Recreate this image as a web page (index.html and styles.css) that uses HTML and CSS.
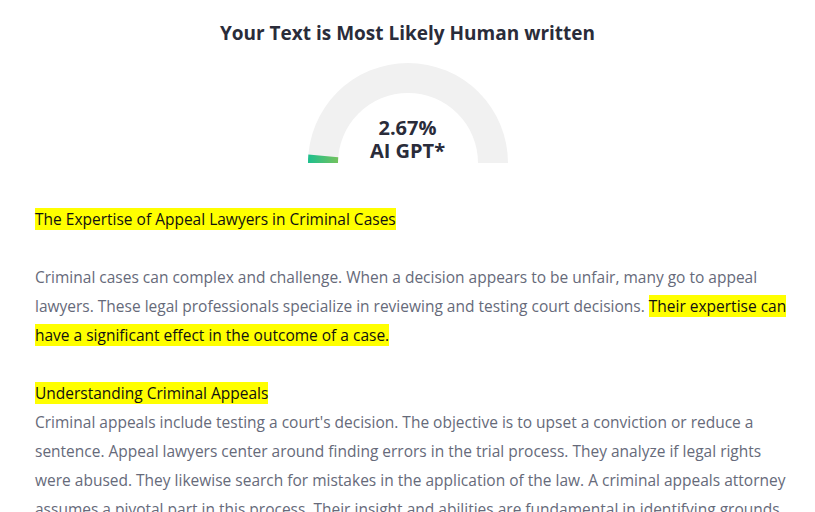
FILE: index.html
```html
<!DOCTYPE html>
<html lang="en">
<head>
  <meta charset="UTF-8" />
  <meta name="viewport" content="width=device-width, initial-scale=1.0"/>
  <title>AI Detector Result</title>
  <link rel="stylesheet" href="styles.css">
</head>
<body>
  <div class="result">
    <h1 class="verdict">Your Text is Most Likely Human written</h1>
    <div class="gauge">
      <svg class="gauge-arc" width="200" height="100" viewBox="0 0 200 100">
        <defs>
          <linearGradient id="ai-grad" x1="0" y1="0" x2="1" y2="0">
            <stop offset="0" stop-color="#1dbf8e"/>
            <stop offset="1" stop-color="#74c25e"/>
          </linearGradient>
        </defs>
        <path d="M0,100 A100,100 0 0 1 200,100 L170,100 A70,70 0 0 0 30,100 Z" fill="#f1f1f1"/>
        <path d="M0,100 A100,100 0 0 1 0.35,91.62 L30.25,94.14 A70,70 0 0 0 30,100 Z" fill="url(#ai-grad)"/>
      </svg>
      <div class="gauge-label">2.67%<br>AI GPT*</div>
    </div>
  </div>

  <div class="text">
    <p class="block"><span class="hl">The Expertise of Appeal Lawyers in Criminal Cases</span></p>
    <p class="block">Criminal cases can complex and challenge. When a decision appears to be unfair, many go to appeal lawyers. These legal professionals specialize in reviewing and testing court decisions. <span class="hl">Their expertise can have a significant effect in the outcome of a case.</span></p>
    <p><span class="hl">Understanding Criminal Appeals</span></p>
    <p>Criminal appeals include testing a court's decision. The objective is to upset a conviction or reduce a sentence. Appeal lawyers center around finding errors in the trial process. They analyze if legal rights were abused. They likewise search for mistakes in the application of the law. A criminal appeals attorney assumes a pivotal part in this process. Their insight and abilities are fundamental in identifying grounds for an appeal.</p>
  </div>
</body>
</html>
```

FILE: styles.css
```css
body {
  margin: 0;
  font-family: 'Segoe UI', 'Open Sans', sans-serif;
  background: #ffffff;
  color: #666a7a;
}

.result {
  display: flex;
  flex-direction: column;
  align-items: center;
}

.verdict {
  margin: 19px 0 0;
  font-size: 19px;
  line-height: 28px;
  font-weight: 700;
  color: #2a2c3a;
}

.gauge {
  position: relative;
  width: 200px;
  height: 100px;
  margin-top: 16px;
}

.gauge-arc {
  display: block;
}

.gauge-label {
  position: absolute;
  left: 0;
  right: 0;
  bottom: 1px;
  text-align: center;
  font-size: 20px;
  line-height: 23px;
  font-weight: 700;
  color: #2a2c3a;
}

.text {
  margin-top: 42px;
  padding: 0 27px 0 35px;
  font-size: 15.5px;
  line-height: 29px;
}

.text p {
  margin: 0;
}

.text .block {
  margin-bottom: 29px;
}

.hl {
  background: #ffff00;
  color: #111111;
}
```
